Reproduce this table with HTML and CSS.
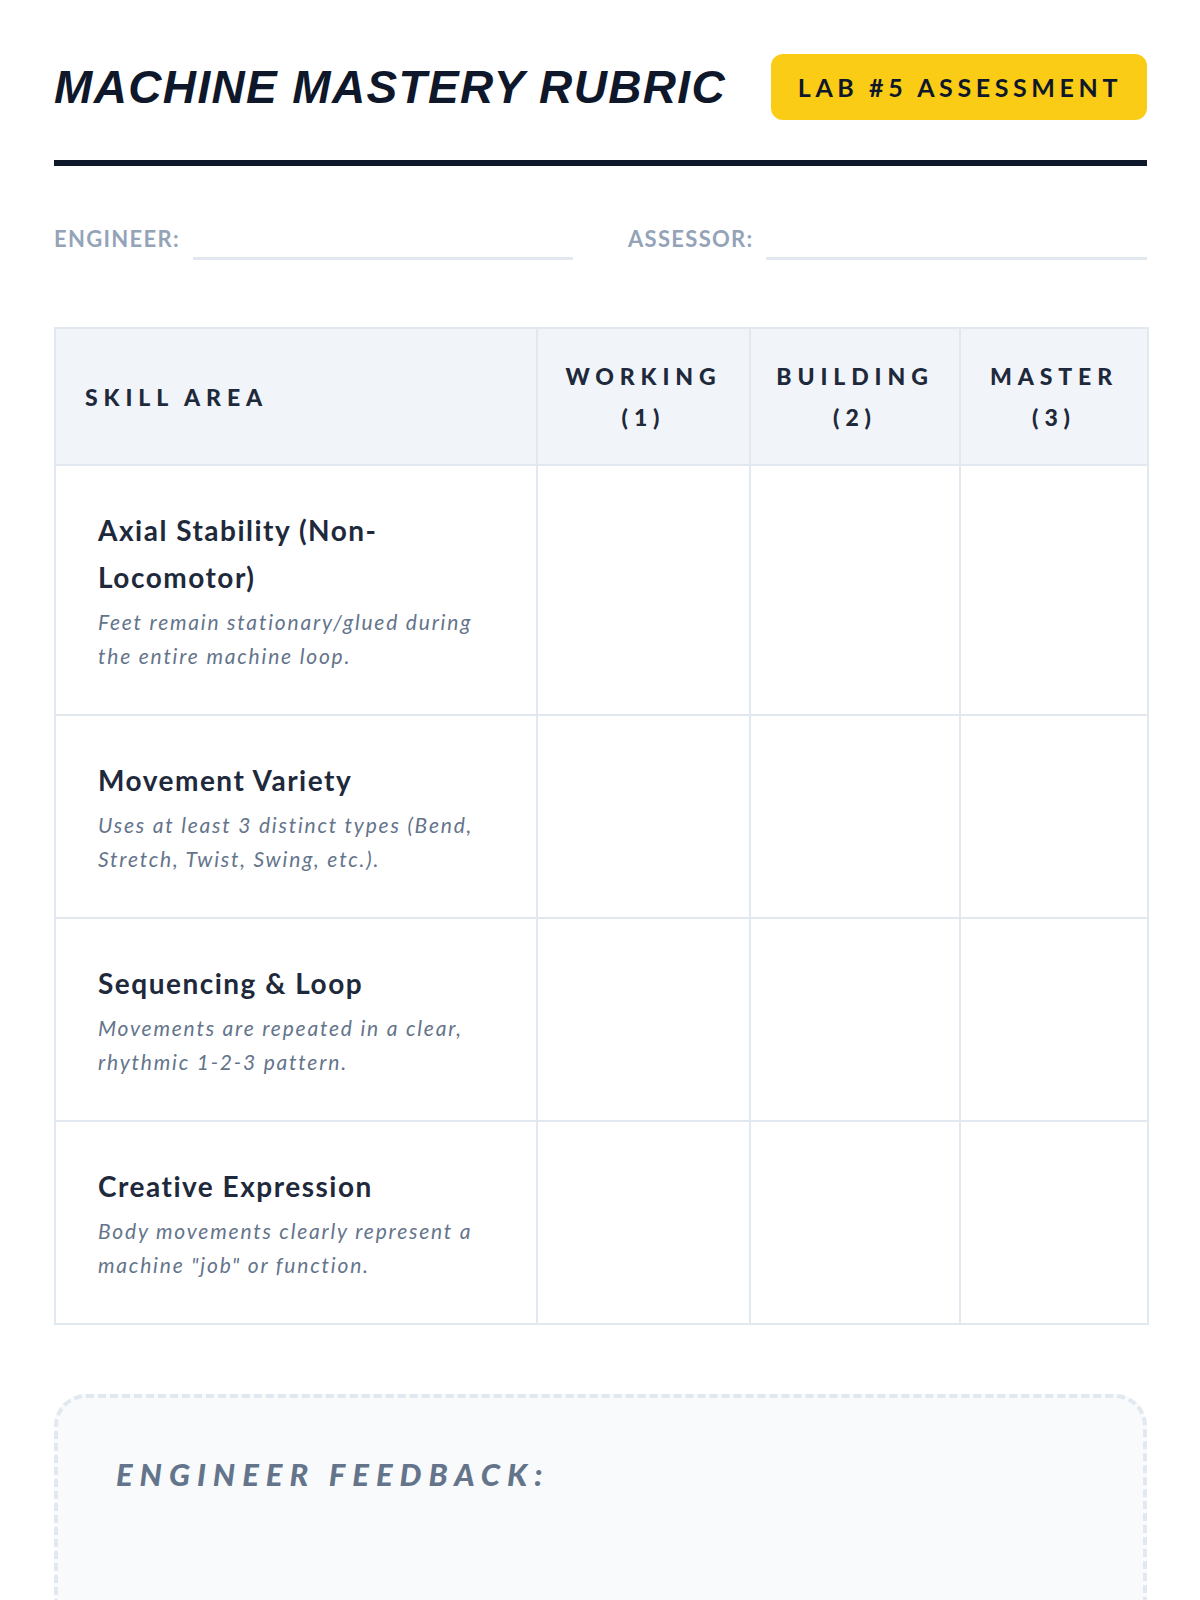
FILE: index.html
```html
<!DOCTYPE html>
<html lang="en">
<head>
<meta charset="utf-8">
<title>Machine Mastery Rubric</title>
<link rel="stylesheet" href="styles.css">
</head>
<body>
<main class="page">
  <header class="top">
    <h1 class="title">MACHINE MASTERY RUBRIC</h1>
    <div class="badge">LAB #5 ASSESSMENT</div>
  </header>

  <section class="fields">
    <div class="field">
      <span class="field-label">ENGINEER:</span>
      <span class="field-line"></span>
    </div>
    <div class="field">
      <span class="field-label">ASSESSOR:</span>
      <span class="field-line"></span>
    </div>
  </section>

  <table class="rubric">
    <colgroup>
      <col class="c-skill">
      <col class="c-working">
      <col class="c-building">
      <col class="c-master">
    </colgroup>
    <thead>
      <tr>
        <th class="th-skill">SKILL AREA</th>
        <th>WORKING<br>(1)</th>
        <th>BUILDING<br>(2)</th>
        <th>MASTER<br>(3)</th>
      </tr>
    </thead>
    <tbody>
      <tr>
        <td class="skill">
          <div class="skill-name">Axial Stability (Non-Locomotor)</div>
          <div class="skill-desc">Feet remain stationary/glued during the entire machine loop.</div>
        </td>
        <td></td><td></td><td></td>
      </tr>
      <tr>
        <td class="skill">
          <div class="skill-name">Movement Variety</div>
          <div class="skill-desc">Uses at least 3 distinct types (Bend, Stretch, Twist, Swing, etc.).</div>
        </td>
        <td></td><td></td><td></td>
      </tr>
      <tr>
        <td class="skill">
          <div class="skill-name">Sequencing &amp; Loop</div>
          <div class="skill-desc">Movements are repeated in a clear, rhythmic 1-2-3 pattern.</div>
        </td>
        <td></td><td></td><td></td>
      </tr>
      <tr>
        <td class="skill">
          <div class="skill-name">Creative Expression</div>
          <div class="skill-desc">Body movements clearly represent a machine "job" or function.</div>
        </td>
        <td></td><td></td><td></td>
      </tr>
    </tbody>
  </table>

  <section class="feedback">
    <h2 class="feedback-title">ENGINEER FEEDBACK:</h2>
  </section>
</main>
</body>
</html>
```

FILE: styles.css
```css
* { box-sizing: border-box; }

html, body {
  margin: 0;
  padding: 0;
  background: #ffffff;
}

body {
  font-family: "Lato", "Noto Sans", sans-serif;
  color: #1e293b;
}

.page {
  padding: 54px 53px 0 54px;
}

.top {
  display: flex;
  justify-content: space-between;
  align-items: center;
  padding-bottom: 40px;
  border-bottom: 6px solid #0f172a;
}

.title {
  margin: 0;
  font-family: "Liberation Sans", Arial, sans-serif;
  font-style: italic;
  font-weight: 700;
  font-size: 46px;
  line-height: 1;
  letter-spacing: 1.35px;
  color: #0f172a;
}

.badge {
  background: #facc15;
  border-radius: 12px;
  height: 66px;
  display: flex;
  align-items: center;
  padding: 0 25px 0 27px;
  font-weight: 700;
  font-size: 25px;
  letter-spacing: 4.6px;
  color: #0f172a;
}

.fields {
  display: grid;
  grid-template-columns: 1fr 1fr;
  column-gap: 55px;
  margin-top: 60px;
}

.field {
  display: flex;
  align-items: flex-end;
  gap: 13px;
}

.field-label {
  font-size: 22px;
  line-height: 26px;
  font-weight: 700;
  letter-spacing: 1.3px;
  color: #94a3b8;
  margin-bottom: 8px;
}

.field-line {
  flex: 1;
  height: 3px;
  background: #e2e8f0;
}

.rubric {
  width: 100%;
  margin-top: 67px;
  border-collapse: collapse;
  table-layout: fixed;
  border: 2px solid #e2e8f0;
}

.c-skill { width: 482px; }
.c-working { width: 213px; }
.c-building { width: 210px; }
.c-master { width: 188px; }

.rubric th,
.rubric td {
  border: 2px solid #e2e8f0;
}

.rubric th {
  background: #f1f5f9;
  padding: 27px 7px 26px;
  font-weight: 900;
  font-size: 23px;
  line-height: 41px;
  letter-spacing: 5.9px;
  text-align: center;
  color: #1e293b;
}

.rubric th.th-skill {
  text-align: left;
  padding-left: 29px;
}

.rubric td.skill {
  padding: 41px 42px;
  vertical-align: middle;
}

.skill-name {
  font-size: 28px;
  line-height: 47px;
  font-weight: 700;
  letter-spacing: 1.5px;
  color: #1e293b;
}

.skill-desc {
  margin-top: 4px;
  font-size: 21px;
  line-height: 34px;
  font-style: italic;
  letter-spacing: 1.8px;
  color: #64748b;
}

.feedback {
  margin-top: 69px;
  min-height: 320px;
  background: #f8fafc;
  border: 4px dashed #e2e8f0;
  border-radius: 32px;
  padding: 58px 58px;
}

.feedback-title {
  margin: 0;
  font-size: 31px;
  line-height: 36px;
  font-weight: 900;
  font-style: italic;
  letter-spacing: 7px;
  color: #64748b;
}
```
